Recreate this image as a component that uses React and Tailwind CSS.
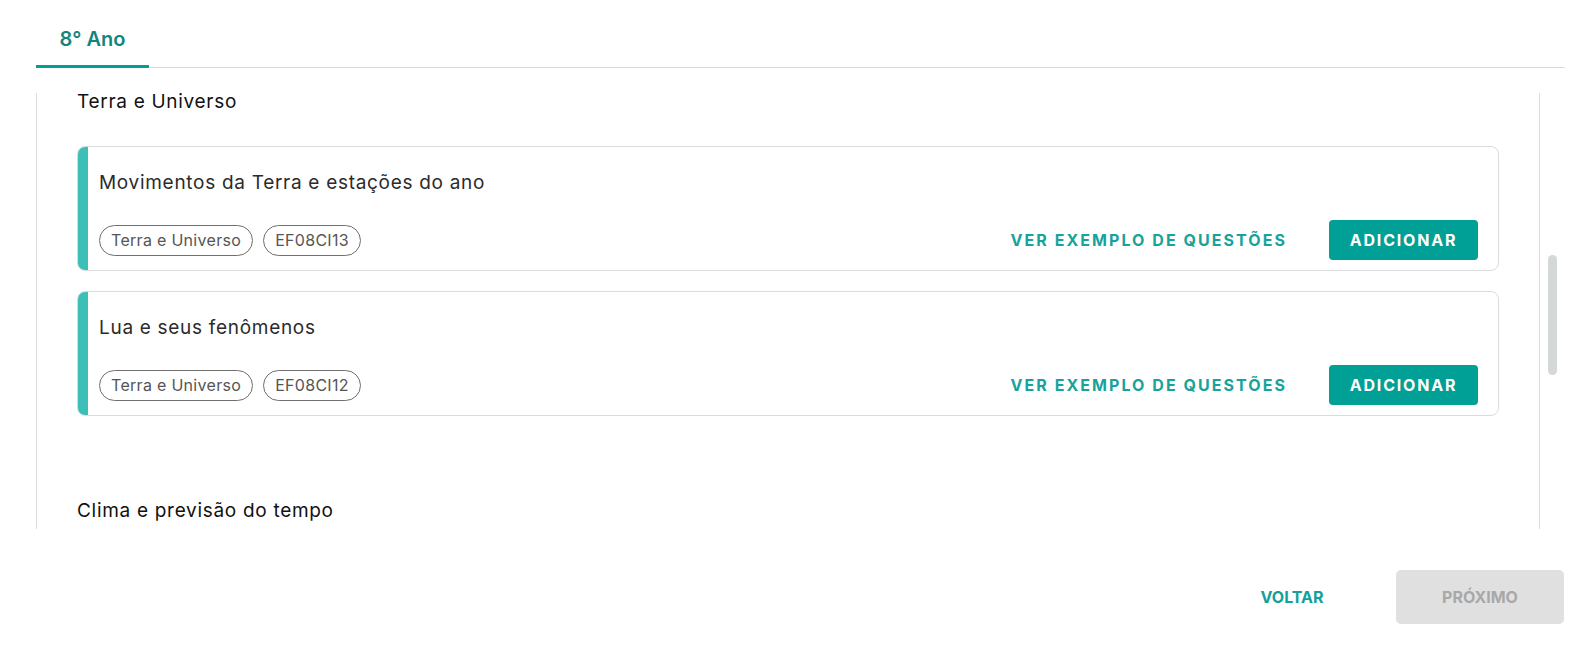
import React from "react";

const cards = [
  { title: "Movimentos da Terra e estações do ano", tag: "Terra e Universo", code: "EF08CI13" },
  { title: "Lua e seus fenômenos", tag: "Terra e Universo", code: "EF08CI12" },
];

function Card({ title, tag, code }) {
  return (
    <div className="flex rounded-[8px] border border-[#dcdcdc] overflow-hidden h-[125px]">
      <div className="w-[10px] shrink-0 bg-[#3bbfb7]" />
      <div className="flex-1 flex flex-col pl-[11px] pr-[20px] pt-[24px]">
        <div className="text-[19px] leading-[24px] tracking-[0.7px] text-[#2b2b2b]">{title}</div>
        <div className="mt-[25px] flex items-center justify-between">
          <div className="flex items-center gap-[10px]">
            <span className="h-[31px] px-[11px] flex items-center rounded-full border border-[#6f6f6f] text-[16px] tracking-[0.3px] text-[#555]">{tag}</span>
            <span className="h-[31px] px-[11px] flex items-center rounded-full border border-[#6f6f6f] text-[16px] tracking-[0.3px] text-[#555]">{code}</span>
          </div>
          <div className="flex items-center gap-[42px]">
            <button className="text-[16px] font-bold tracking-[2.05px] text-[#17a39c]">VER EXEMPLO DE QUESTÕES</button>
            <button className="h-[40px] w-[149px] rounded-[4px] bg-[#00a096] text-white text-[16px] font-bold tracking-[1.8px]">ADICIONAR</button>
          </div>
        </div>
      </div>
    </div>
  );
}

export default function App() {
  return (
    <div className="w-[1590px] h-[672px] bg-white flex flex-col" style={{ fontFamily: "Inter, 'Noto Sans', sans-serif" }}>
      <div className="ml-[36px] mr-[25px] h-[68px] border-b border-[#dadada] flex items-end">
        <div className="w-[113px] h-[68px] flex items-center justify-center border-b-[3px] border-[#00a096] -mb-px">
          <span className="text-[20px] font-semibold text-[#13857f] pt-[12px]">8° Ano</span>
        </div>
      </div>
      <div className="flex ml-[36px] mt-[25px] h-[436px]">
        <div className="w-[1504px] h-full border-x border-[#dcdcdc]">
          <div className="pl-[40px] pr-[40px] -mt-[5px]">
            <div className="text-[19px] leading-[27px] text-[#111] tracking-[0.7px]">Terra e Universo</div>
            <div className="mt-[31px] flex flex-col gap-[20px]">
              {cards.map((c) => (
                <Card key={c.code} {...c} />
              ))}
            </div>
            <div className="mt-[81px] text-[19px] leading-[27px] text-[#111] tracking-[0.7px]">Clima e previsão do tempo</div>
          </div>
        </div>
        <div className="ml-[8px] w-[9px] pt-[162px]">
          <div className="h-[120px] w-[9px] rounded-full bg-[#d5d8d8]" />
        </div>
      </div>
      <div className="mt-[41px] mr-[26px] flex justify-end gap-[20px]">
        <button className="h-[54px] w-[168px] text-[16px] font-bold text-[#12a19a]">VOLTAR</button>
        <button className="h-[54px] w-[168px] rounded-[5px] bg-[#e0e0e0] text-[16px] font-bold text-[#a8a8a8]">PRÓXIMO</button>
      </div>
    </div>
  );
}
